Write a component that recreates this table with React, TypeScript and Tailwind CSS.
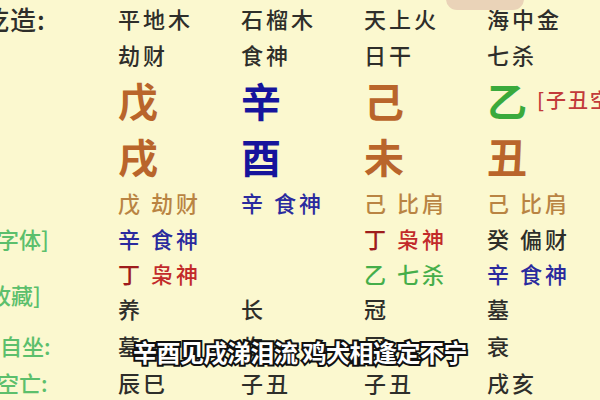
import React from "react";

const font = "font-['Noto_Sans_CJK_SC','Noto_Sans',sans-serif]";

type Cell = { t: React.ReactNode; c?: string };

function Row({
  h,
  label,
  cells,
  size,
}: {
  h: string;
  label?: React.ReactNode;
  cells: Cell[];
  size: string;
}) {
  return (
    <div className={`flex items-center ${h}`}>
      <div className="w-[118px] shrink-0 h-full relative flex items-center">{label}</div>
      {cells.map((c, i) => (
        <div
          key={i}
          className={`w-[123px] shrink-0 whitespace-nowrap leading-none ${size} ${c.c ?? "text-[#2e2e2a]"}`}
        >
          {c.t}
        </div>
      ))}
    </div>
  );
}

export default function App() {
  const dark = "text-[#2e2e2a]";
  const brown = "text-[#b9652b] font-bold";
  const blue = "text-[#16149c] font-bold";
  const green = "text-[#3aaa3c] font-bold";
  const tan = "text-[#b98443]";
  const blueS = "text-[#2a2a9e]";
  const redS = "text-[#c22a2a]";
  const greenS = "text-[#45ae4a]";
  const small = "text-[22px] tracking-[3px] font-medium";
  const big = "text-[40px]";
  const lbl = "text-[#5cbf6c] text-[22px] font-medium leading-none whitespace-nowrap";

  return (
    <div className={`w-[600px] h-[400px] overflow-hidden relative bg-[#fbf8cf] ${font}`}>
      <div className="absolute left-[446px] -top-[12px] w-[78px] h-[22px] rounded-full bg-[#ead3b8]" />
      <div className="flex flex-col">
        <Row
          h="h-[36px]"
          size={small}
          label={
            <span className="absolute -left-[17px] top-[6px] text-[26px] font-medium leading-none text-[#2e2e2a] tracking-[1px]">
              乾造:
            </span>
          }
          cells={[{ t: "平地木" }, { t: "石榴木" }, { t: "天上火" }, { t: "海中金" }]}
        />
        <Row
          h="h-[36px]"
          size={small}
          cells={[{ t: "劫财" }, { t: "食神" }, { t: "日干" }, { t: "七杀" }]}
        />
        <Row
          h="h-[56px]"
          size={big}
          cells={[
            { t: "戊", c: brown },
            { t: "辛", c: blue },
            { t: "己", c: brown },
            {
              t: (
                <span className="flex items-center">
                  <span>乙</span>
                  <span className="ml-[10px] text-[20px] font-medium tracking-[2px] text-[#c23a3a]">
                    [子丑空亡]
                  </span>
                </span>
              ),
              c: green,
            },
          ]}
        />
        <Row
          h="h-[56px]"
          size={big}
          cells={[
            { t: "戌", c: brown },
            { t: "酉", c: blue },
            { t: "未", c: brown },
            { t: "丑", c: brown },
          ]}
        />
        <Row
          h="h-[36px]"
          size={small}
          cells={[
            { t: "戊 劫财", c: tan },
            { t: "辛 食神", c: blueS },
            { t: "己 比肩", c: tan },
            { t: "己 比肩", c: tan },
          ]}
        />
        <Row
          h="h-[36px]"
          size={small}
          label={<span className={`absolute -left-[3px] ${lbl}`}>字体]</span>}
          cells={[
            { t: "辛 食神", c: blueS },
            { t: "" },
            {
              t: (
                <>
                  <span className="text-[#9e1c1c]">丁</span> 枭神
                </>
              ),
              c: redS,
            },
            { t: "癸 偏财", c: dark },
          ]}
        />
        <Row
          h="h-[34px]"
          size={small}
          cells={[
            {
              t: (
                <>
                  <span className="text-[#9e1c1c]">丁</span> 枭神
                </>
              ),
              c: redS,
            },
            { t: "" },
            { t: "乙 七杀", c: greenS },
            { t: "辛 食神", c: blueS },
          ]}
        />
        <Row
          h="h-[36px]"
          size={small}
          label={<span className={`absolute -left-[11px] -top-[7px] ${lbl}`}>收藏]</span>}
          cells={[{ t: "养" }, { t: "长" }, { t: "冠" }, { t: "墓" }]}
        />
        <Row
          h="h-[38px]"
          size={small}
          label={<span className={`absolute left-0 ${lbl}`}>自坐:</span>}
          cells={[{ t: "墓" }, { t: "临" }, { t: "冠" }, { t: "衰" }]}
        />
        <Row
          h="h-[36px]"
          size={small}
          label={<span className={`absolute -left-[3px] ${lbl}`}>空亡:</span>}
          cells={[{ t: "辰巳" }, { t: "子丑" }, { t: "子丑" }, { t: "戌亥" }]}
        />
      </div>
      <div className="absolute left-0 right-0 top-[340px] flex justify-center">
        <span className="text-[24px] leading-none font-bold text-white tracking-[-0.5px] whitespace-nowrap [-webkit-text-stroke:4px_#111] [paint-order:stroke_fill]">
          辛酉见戌涕泪流 鸡犬相逢定不宁
        </span>
      </div>
    </div>
  );
}
